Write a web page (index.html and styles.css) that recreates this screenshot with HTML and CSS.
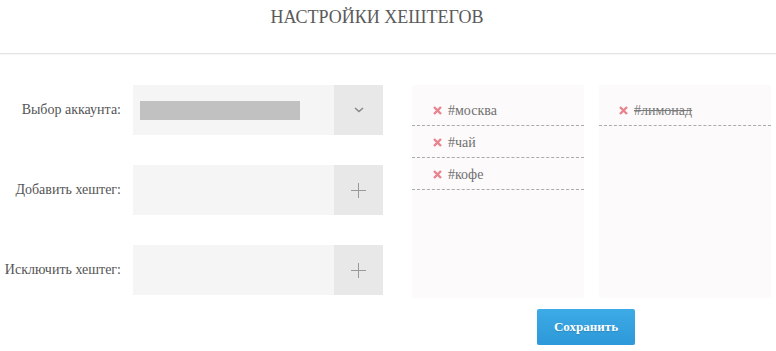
FILE: index.html
```html
<!DOCTYPE html>
<html lang="ru">
<head>
    <meta charset="UTF-8">
    <meta name="viewport" content="width=device-width, initial-scale=1.0">
    <title>Настройки хештегов</title>
    <link rel="stylesheet" href="styles.css">
</head>
<body>
    <header class="page-header">
        <h1 class="page-title">НАСТРОЙКИ ХЕШТЕГОВ</h1>
    </header>

    <main class="settings">
        <div class="form-col">
            <div class="form-row">
                <label class="form-label">Выбор аккаунта:</label>
                <div class="field">
                    <div class="field-input"><span class="account-name"></span></div>
                    <button class="field-btn" type="button">
                        <svg width="10" height="6" viewBox="0 0 10 6"><path d="M1 1 L5 4.5 L9 1" fill="none" stroke="#888" stroke-width="1.6"/></svg>
                    </button>
                </div>
            </div>
            <div class="form-row">
                <label class="form-label">Добавить хештег:</label>
                <div class="field">
                    <div class="field-input"></div>
                    <button class="field-btn" type="button">
                        <svg width="15" height="15" viewBox="0 0 15 15"><path d="M7.5 0 V15 M0 7.5 H15" stroke="#999" stroke-width="1"/></svg>
                    </button>
                </div>
            </div>
            <div class="form-row">
                <label class="form-label">Исключить хештег:</label>
                <div class="field">
                    <div class="field-input"></div>
                    <button class="field-btn" type="button">
                        <svg width="15" height="15" viewBox="0 0 15 15"><path d="M7.5 0 V15 M0 7.5 H15" stroke="#999" stroke-width="1"/></svg>
                    </button>
                </div>
            </div>
        </div>

        <div class="tags-col">
            <div class="tag-panels">
                <ul class="tag-list">
                    <li class="tag"><svg class="tag-del" width="9" height="9" viewBox="0 0 9 9"><path d="M1 1 L8 8 M8 1 L1 8" stroke="#e8838f" stroke-width="2.4"/></svg>#москва</li>
                    <li class="tag"><svg class="tag-del" width="9" height="9" viewBox="0 0 9 9"><path d="M1 1 L8 8 M8 1 L1 8" stroke="#e8838f" stroke-width="2.4"/></svg>#чай</li>
                    <li class="tag"><svg class="tag-del" width="9" height="9" viewBox="0 0 9 9"><path d="M1 1 L8 8 M8 1 L1 8" stroke="#e8838f" stroke-width="2.4"/></svg>#кофе</li>
                </ul>
                <ul class="tag-list">
                    <li class="tag tag-excluded"><svg class="tag-del" width="9" height="9" viewBox="0 0 9 9"><path d="M1 1 L8 8 M8 1 L1 8" stroke="#e8838f" stroke-width="2.4"/></svg><s>#лимонад</s></li>
                </ul>
            </div>
            <div class="actions">
                <button class="btn-save" type="button">Сохранить</button>
            </div>
        </div>
    </main>
</body>
</html>
```

FILE: styles.css
```css
* {
    margin: 0;
    padding: 0;
    box-sizing: border-box;
}

body {
    font-family: 'Liberation Serif', 'Times New Roman', serif;
    background: #fff;
    color: #555;
}

.page-header {
    height: 54px;
    border-bottom: 1px solid #e4e4e4;
    box-shadow: 0 1px 1px rgba(0, 0, 0, 0.03);
    text-align: center;
    padding-right: 22px;
}

.page-title {
    font-size: 18px;
    font-weight: normal;
    color: #5a5a5a;
    padding-top: 6px;
    line-height: 22px;
}

.settings {
    display: flex;
    gap: 29px;
    padding-top: 31px;
}

.form-col {
    display: flex;
    flex-direction: column;
    gap: 30px;
}

.form-row {
    display: flex;
    align-items: center;
    gap: 12px;
}

.form-label {
    width: 121px;
    text-align: right;
    font-size: 14px;
    color: #555;
}

.field {
    display: flex;
    width: 250px;
    height: 50px;
}

.field-input {
    flex: 1;
    background: #f5f5f5;
    display: flex;
    align-items: center;
    padding-left: 7px;
}

.account-name {
    display: block;
    width: 160px;
    height: 19px;
    background: #c1c1c1;
}

.field-btn {
    width: 49px;
    border: none;
    background: #e8e8e8;
    display: flex;
    align-items: center;
    justify-content: center;
}

.tags-col {
    display: flex;
    flex-direction: column;
}

.tag-panels {
    display: flex;
    gap: 15px;
}

.tag-list {
    list-style: none;
    width: 172px;
    height: 213px;
    background: #fcfafa;
    padding-top: 9px;
}

.tag {
    display: flex;
    align-items: center;
    height: 32px;
    padding-left: 21px;
    padding-top: 2px;
    border-bottom: 1px dashed #ababab;
    font-size: 14px;
    color: #707070;
}

.tag-del {
    margin-right: 6px;
}

.tag-excluded {
    padding-left: 20px;
}

.tag-excluded s {
    color: #7a7a7a;
}

.actions {
    padding-top: 11px;
    padding-left: 125px;
}

.btn-save {
    width: 98px;
    height: 36px;
    border: none;
    border-radius: 2px;
    background: linear-gradient(#3cabe6, #2e98d8);
    box-shadow: 0 1px 1px rgba(0, 0, 0, 0.15);
    color: #fff;
    font-family: 'Liberation Serif', 'Times New Roman', serif;
    font-size: 13px;
    font-weight: bold;
    text-shadow: 0 1px 1px rgba(0, 0, 0, 0.15);
    cursor: pointer;
}
```
